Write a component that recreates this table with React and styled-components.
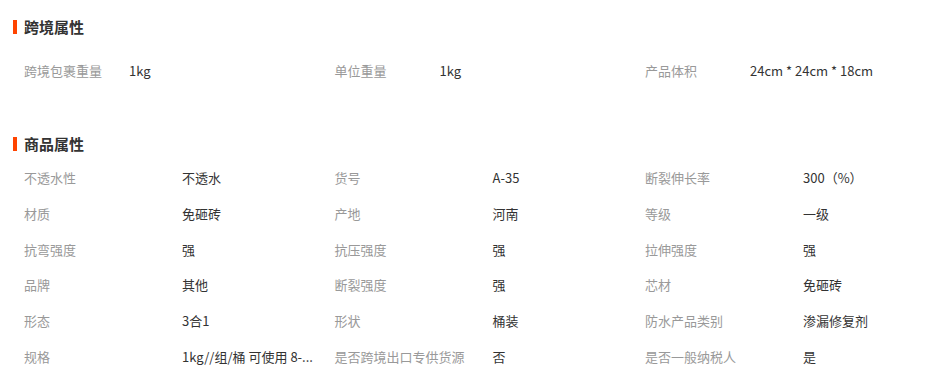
import React from 'react'
import styled, { createGlobalStyle } from 'styled-components'

const GlobalStyle = createGlobalStyle`
  body {
    margin: 0;
    background: #fff;
    font-family: "Noto Sans CJK SC", "Liberation Sans", sans-serif;
  }
`

const crossBorder = [
  { label: '跨境包裹重量', value: '1kg' },
  { label: '单位重量', value: '1kg' },
  { label: '产品体积', value: '24cm * 24cm * 18cm' },
]

const goods = [
  { label: '不透水性', value: '不透水' },
  { label: '货号', value: 'A-35' },
  { label: '断裂伸长率', value: '300（%）' },
  { label: '材质', value: '免砸砖' },
  { label: '产地', value: '河南' },
  { label: '等级', value: '一级' },
  { label: '抗弯强度', value: '强' },
  { label: '抗压强度', value: '强' },
  { label: '拉伸强度', value: '强' },
  { label: '品牌', value: '其他' },
  { label: '断裂强度', value: '强' },
  { label: '芯材', value: '免砸砖' },
  { label: '形态', value: '3合1' },
  { label: '形状', value: '桶装' },
  { label: '防水产品类别', value: '渗漏修复剂' },
  { label: '规格', value: '1kg//组/桶 可使用 8-...' },
  { label: '是否跨境出口专供货源', value: '否' },
  { label: '是否一般纳税人', value: '是' },
]

const Page = styled.div`
  width: 929px;
  padding-top: 19px;
`

const Section = styled.section`
  margin-bottom: ${(p) => p.$gap || 0}px;
`

const Title = styled.h3`
  display: flex;
  align-items: center;
  gap: 7px;
  margin: 0 0 ${(p) => p.$below}px;
  padding-left: 13px;
  height: 16px;
  font-size: 15px;
  font-weight: bold;
  color: #333;
  line-height: 16px;
`

const Bar = styled.span`
  width: 4px;
  height: 14px;
  background: #ff4400;
`

const Grid = styled.div`
  display: grid;
  grid-template-columns: repeat(3, 310.5px);
`

const Item = styled.div`
  display: flex;
  align-items: center;
  height: ${(p) => p.$h}px;
  padding-left: 24px;
  font-size: 13px;
  min-width: 0;
`

const Label = styled.span`
  flex: 0 0 ${(p) => p.$w}px;
  color: #999;
  white-space: nowrap;
`

const Value = styled.span`
  flex: 1;
  min-width: 0;
  color: #333;
  white-space: nowrap;
`

const Props = ({ items, labelWidth, rowHeight }) => (
  <Grid>
    {items.map((it) => (
      <Item key={it.label} $h={rowHeight}>
        <Label $w={labelWidth}>{it.label}</Label>
        <Value>{it.value}</Value>
      </Item>
    ))}
  </Grid>
)

export default function App() {
  return (
    <Page>
      <GlobalStyle />
      <Section $gap={48}>
        <Title $below={17}>
          <Bar />
          跨境属性
        </Title>
        <Props items={crossBorder} labelWidth={105} rowHeight={36} />
      </Section>
      <Section>
        <Title $below={8}>
          <Bar />
          商品属性
        </Title>
        <Props items={goods} labelWidth={158} rowHeight={35.7} />
      </Section>
    </Page>
  )
}
